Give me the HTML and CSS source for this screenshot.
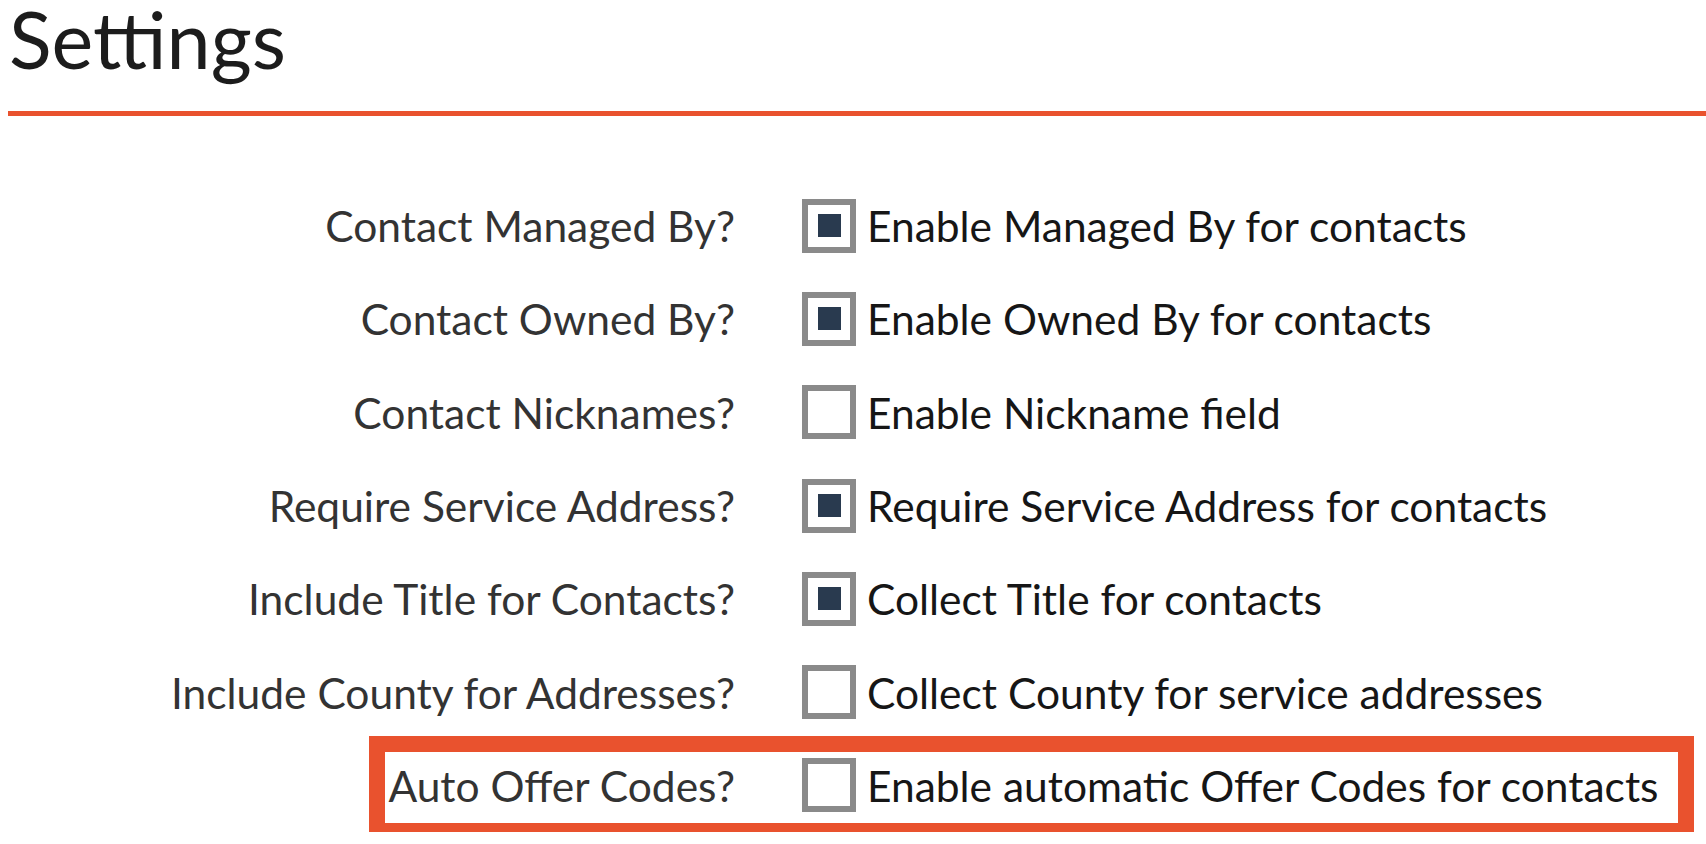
FILE: index.html
```html
<!DOCTYPE html>
<html>
<head>
<meta charset="utf-8">
<link rel="stylesheet" href="styles.css">
</head>
<body>
<header class="page-header">
  <h1 class="title">Settings</h1>
</header>
<form class="settings">
  <div class="row">
    <span class="label">Contact Managed By?</span>
    <span class="box checked"><span class="mark"></span></span>
    <span class="text">Enable Managed By for contacts</span>
  </div>
  <div class="row">
    <span class="label">Contact Owned By?</span>
    <span class="box checked"><span class="mark"></span></span>
    <span class="text">Enable Owned By for contacts</span>
  </div>
  <div class="row">
    <span class="label">Contact Nicknames?</span>
    <span class="box"></span>
    <span class="text">Enable Nickname field</span>
  </div>
  <div class="row">
    <span class="label">Require Service Address?</span>
    <span class="box checked"><span class="mark"></span></span>
    <span class="text">Require Service Address for contacts</span>
  </div>
  <div class="row">
    <span class="label">Include Title for Contacts?</span>
    <span class="box checked"><span class="mark"></span></span>
    <span class="text">Collect Title for contacts</span>
  </div>
  <div class="row">
    <span class="label">Include County for Addresses?</span>
    <span class="box"></span>
    <span class="text">Collect County for service addresses</span>
  </div>
  <div class="row highlighted">
    <span class="label">Auto Offer Codes?</span>
    <span class="box"></span>
    <span class="text">Enable automatic Offer Codes for contacts</span>
  </div>
</form>
</body>
</html>
```

FILE: styles.css
```css
html, body {
  background: #ffffff;
}
body {
  margin: 0;
  padding: 8px 0 0 8px;
  font-family: Lato, "Noto Sans", sans-serif;
  color: #1b1b1b;
  overflow: hidden;
}
.page-header {
  border-bottom: 5px solid #e9522e;
  height: 103px;
}
.title {
  margin: 0;
  padding: 0 0 0 1px;
  font-size: 79px;
  font-weight: 400;
  line-height: 62px;
  color: #1c1c1c;
}
.settings {
  display: flex;
  flex-direction: column;
  padding-top: 63px;
}
.row {
  position: relative;
  display: grid;
  grid-template-columns: 727px 67px 54px auto;
  align-items: center;
  height: 93.3px;
}
.label {
  grid-column: 1;
  text-align: right;
  font-size: 42.5px;
  color: #333333;
  white-space: nowrap;
}
.box {
  grid-column: 3;
  box-sizing: border-box;
  width: 54px;
  height: 54px;
  border: 6px solid #8a8a8a;
  background: #fff;
  display: flex;
  align-items: center;
  justify-content: center;
}
.mark {
  width: 23px;
  height: 23px;
  background: #293a4f;
}
.text {
  grid-column: 4;
  margin-left: 11px;
  font-size: 42.5px;
  color: #161616;
  white-space: nowrap;
}
.highlighted::before {
  content: "";
  position: absolute;
  left: 361px;
  right: 12px;
  top: -3px;
  bottom: -7px;
  border: 16px solid #e9522e;
  box-sizing: border-box;
}
```
